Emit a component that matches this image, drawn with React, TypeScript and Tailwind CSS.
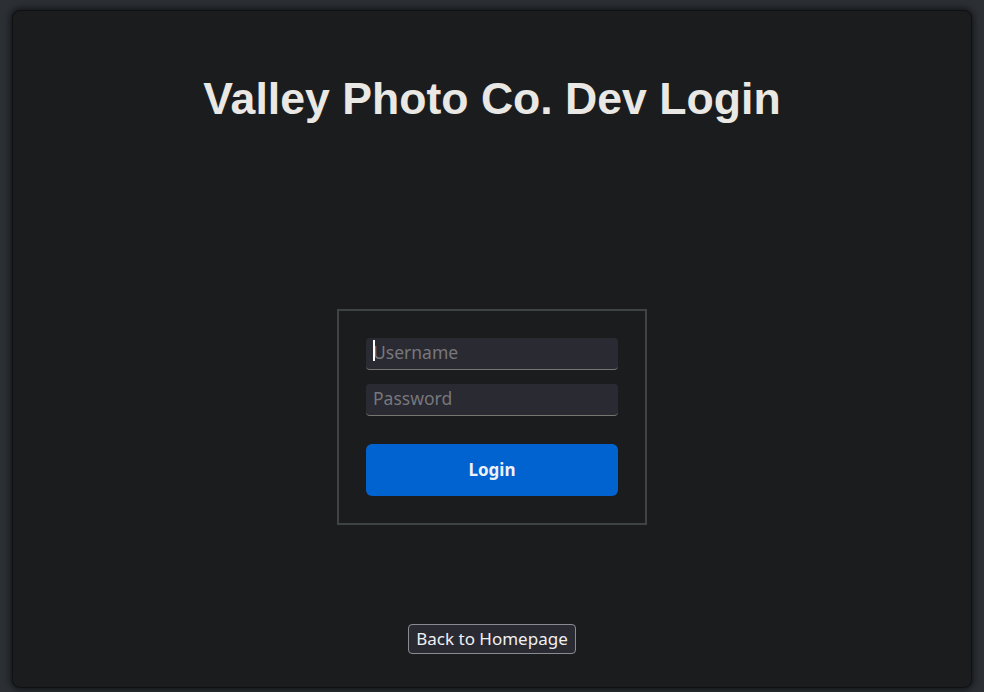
import React from "react";

export default function App() {
  return (
    <div className="h-[692px] w-[984px] bg-[#2c3035] pt-[10px] pl-[12px] pr-[12px] overflow-hidden">
      <div className="h-[678px] w-[960px] rounded-[8px] bg-[#1b1c1e] border border-[#0f1012] shadow-[0_0_6px_2px_rgba(0,0,0,0.55)] flex flex-col items-center">
        <h1
          className="mt-[62px] text-[44.6px] font-bold leading-[51px] text-[#eae8e4]"
          style={{ fontFamily: '"Liberation Sans", Arial, sans-serif' }}
        >
          Valley Photo Co. Dev Login
        </h1>
        <div
          className="mt-[185px] w-[310px] h-[216px] border-2 border-[#3e4441] px-[27px] pt-[27px] flex flex-col"
          style={{ fontFamily: '"Noto Sans", "Open Sans", sans-serif' }}
        >
          <div className="relative">
            <input
              placeholder="Username"
              className="w-[252px] h-[32px] rounded-[4px] bg-[#2a2a32] border-b border-[#77756f] px-[7px] pb-[4px] text-[17.5px] text-[#ddd] placeholder:text-[#77777c] outline-none"
            />
            <div className="absolute left-[7px] top-[2px] w-[2px] h-[21px] bg-white" />
          </div>
          <input
            placeholder="Password"
            type="password"
            className="mt-[14px] w-[252px] h-[32px] rounded-[4px] bg-[#2a2a32] border-b border-[#77756f] px-[7px] pb-[4px] text-[17.5px] text-[#ddd] placeholder:text-[#77777c] outline-none"
          />
          <button className="mt-[28px] w-[252px] h-[52px] rounded-[6px] bg-[#0063d0] text-[17px] font-bold text-[#eef2f8]">
            Login
          </button>
        </div>
        <button
          className="mt-[99px] h-[30px] px-[7px] rounded-[4px] bg-[#2a2a33] border border-[#8a8a94] text-[17px] leading-[26px] text-[#f0f0f2]"
          style={{ fontFamily: '"Noto Sans", "Open Sans", sans-serif' }}
        >
          Back to Homepage
        </button>
      </div>
    </div>
  );
}
